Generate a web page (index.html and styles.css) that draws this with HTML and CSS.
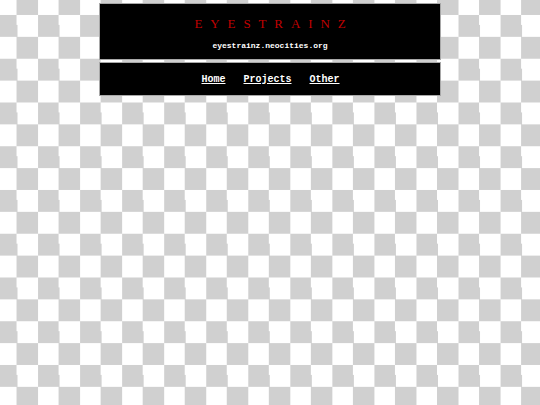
FILE: index.html
```html
<!DOCTYPE html>
<html>
<head>
<meta charset="utf-8">
<title>eyestrainz</title>
<link rel="stylesheet" href="styles.css">
</head>
<body>
<div class="wrap">
  <header class="banner">
    <h1 class="title">EYESTRAINZ</h1>
    <p class="sub">eyestrainz.neocities.org</p>
  </header>
  <nav class="nav">
    <a href="#">Home</a>
    <a href="#">Projects</a>
    <a href="#">Other</a>
  </nav>
</div>
</body>
</html>
```
FILE: styles.css
```css
html {
  background-color: #fff;
  background-image: repeating-conic-gradient(#d0d0d0 0 25%, #ffffff 0 50%);
  background-size: 42.06px 43.75px;
  background-position: -4px -6.9px;
  min-height: 100%;
}
body {
  margin: 0;
  font-family: "Liberation Mono", "Courier New", monospace;
}
.wrap {
  width: 342px;
  margin: 3px auto 0;
  display: flex;
  flex-direction: column;
  gap: 2px;
}
.banner {
  background: #000;
  border: 1px solid #a8a8a8;
  height: 57px;
  box-sizing: border-box;
  display: flex;
  flex-direction: column;
  align-items: center;
  padding-top: 12px;
}
.title {
  margin: 0;
  font-family: "Liberation Serif", "Times New Roman", serif;
  font-size: 13px;
  font-weight: normal;
  color: #c00000;
  line-height: 16px;
  letter-spacing: 7.9px;
  padding-left: 8px;
}
.sub {
  margin: 9px 0 0;
  font-size: 8px;
  font-weight: bold;
  color: #fff;
  line-height: 10px;
}
.nav {
  background: #000;
  border: 1px solid #a8a8a8;
  height: 34px;
  box-sizing: border-box;
  display: flex;
  justify-content: center;
  align-items: center;
  gap: 18px;
  padding-left: 1px;
}
.nav a {
  color: #fff;
  font-size: 10px;
  font-weight: bold;
  text-decoration: underline;
}
```
